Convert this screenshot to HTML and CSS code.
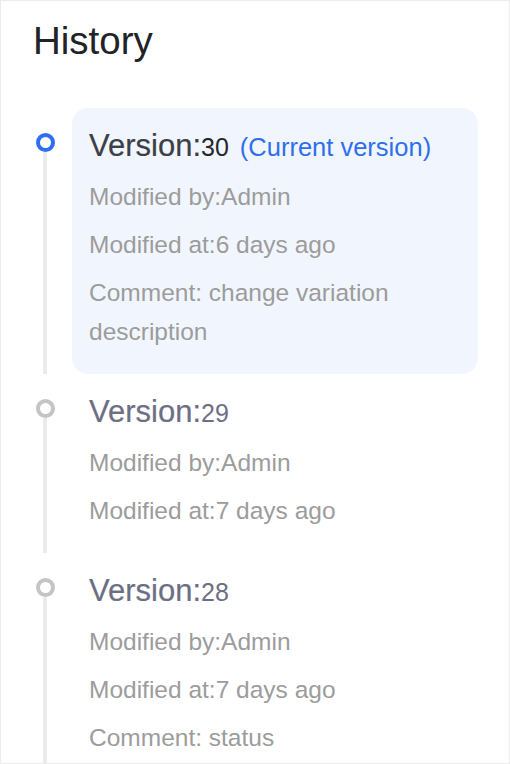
FILE: index.html
```html
<!DOCTYPE html>
<html lang="en">
<head>
<meta charset="utf-8">
<title>History</title>
<link rel="stylesheet" href="styles.css">
</head>
<body>
<div class="frame">
  <h1 class="title">History</h1>
  <div class="timeline">
    <div class="item current">
      <div class="rail"><span class="dot"></span><span class="line"></span></div>
      <div class="card">
        <div class="ver"><span class="ver-label">Version:</span><span class="ver-num">30</span><span class="ver-cur">(Current version)</span></div>
        <div class="meta">Modified by:Admin</div>
        <div class="meta">Modified at:6 days ago</div>
        <div class="meta">Comment: change variation description</div>
      </div>
    </div>
    <div class="item">
      <div class="rail"><span class="dot"></span><span class="line"></span></div>
      <div class="card">
        <div class="ver"><span class="ver-label">Version:</span><span class="ver-num">29</span></div>
        <div class="meta">Modified by:Admin</div>
        <div class="meta">Modified at:7 days ago</div>
      </div>
    </div>
    <div class="item">
      <div class="rail"><span class="dot"></span><span class="line"></span></div>
      <div class="card">
        <div class="ver"><span class="ver-label">Version:</span><span class="ver-num">28</span></div>
        <div class="meta">Modified by:Admin</div>
        <div class="meta">Modified at:7 days ago</div>
        <div class="meta">Comment: status</div>
      </div>
    </div>
  </div>
</div>
</body>
</html>
```
FILE: styles.css
```css
* { box-sizing: border-box; }
html, body { margin: 0; padding: 0; background: #fff; }
body { font-family: "Liberation Sans", Arial, sans-serif; }
.frame {
  width: 510px;
  height: 764px;
  overflow: hidden;
  border: 1px solid #ececec;
  padding: 18px 31px 0 32px;
}
.title {
  margin: 0;
  font-size: 38.5px;
  line-height: 44px;
  font-weight: 400;
  color: #222326;
}
.timeline { margin-top: 45px; }
.item {
  display: grid;
  grid-template-columns: 24px 1fr;
  column-gap: 15px;
}
.rail {
  display: flex;
  flex-direction: column;
  align-items: center;
  padding-top: 25px;
}
.dot {
  width: 19px;
  height: 19px;
  border-radius: 50%;
  border: 4px solid #c4c4c4;
  flex: none;
}
.line {
  flex: 1;
  width: 4px;
  background: #ebebeb;
}
.current .dot { border-color: #2e6ff0; }
.card {
  padding: 17px 17px 23px;
  border-radius: 16px;
}
.current .card { background: #f1f6fe; }
.ver {
  display: flex;
  align-items: baseline;
  line-height: 42px;
  color: #6c6f84;
}
.ver-label { font-size: 31px; -webkit-text-stroke: 0.2px currentColor; }
.ver-num { font-size: 25px; }
.current .ver-label { color: #3c3f46; }
.current .ver-num { color: #25262a; }
.ver-cur {
  font-size: 25.5px;
  color: #2f6feb;
  margin-left: 11px;
}
.meta {
  margin-top: 9px;
  font-size: 24.5px;
  line-height: 39px;
  color: #9c9c9c;
}
```
